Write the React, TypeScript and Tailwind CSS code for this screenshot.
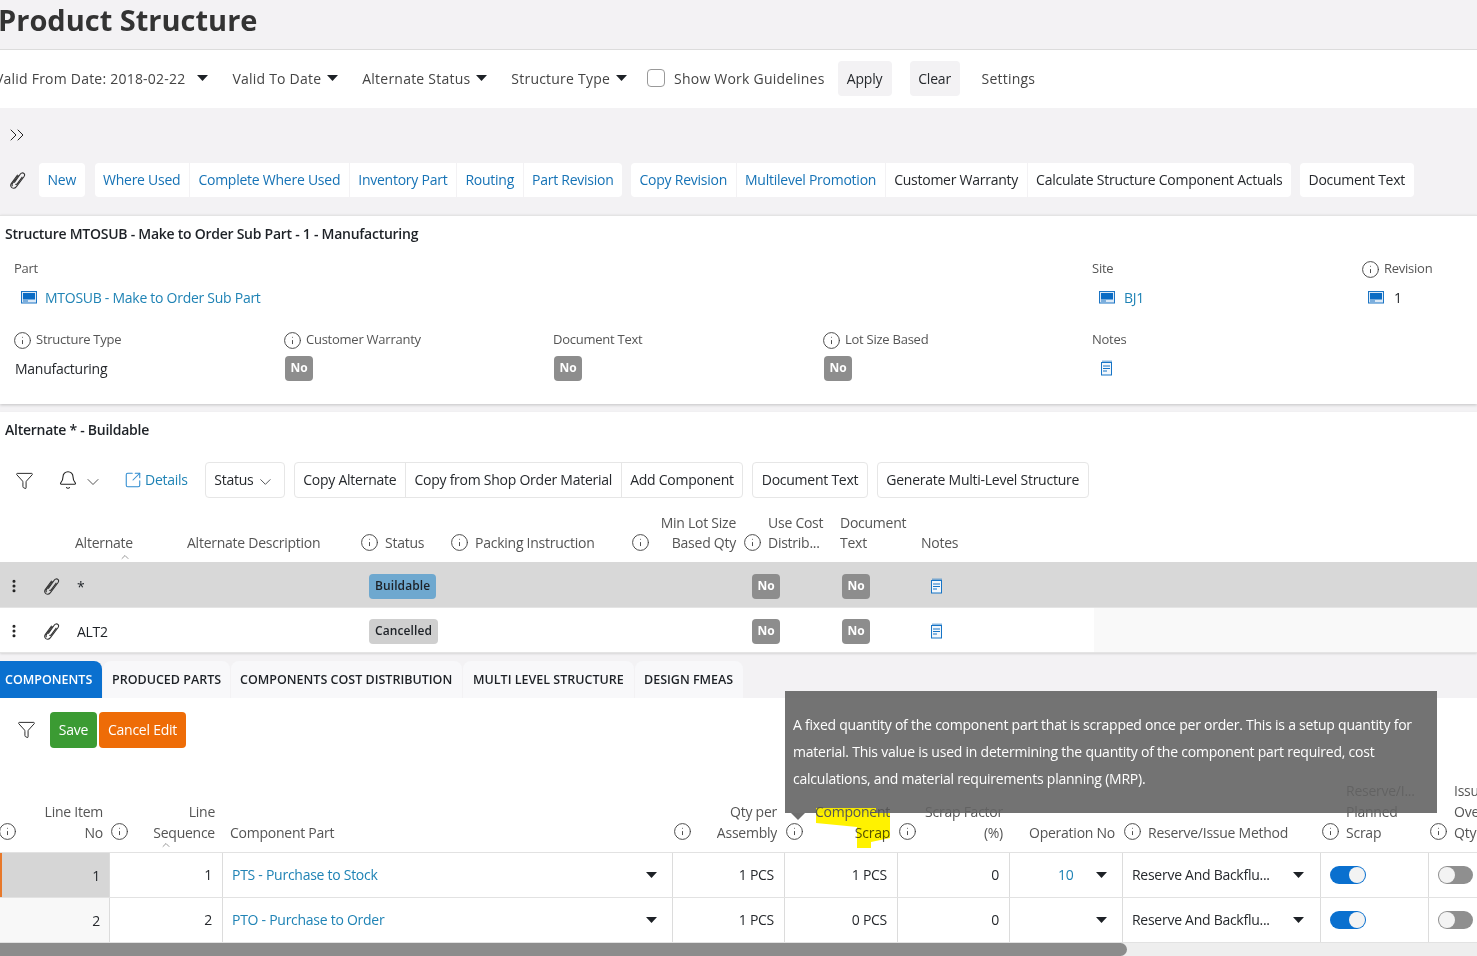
import { Bell, ChevronDown, ChevronUp, ChevronsRight, Filter, Info, MoreVertical, SquareArrowOutUpRight } from "lucide-react";

const FONT = "font-['Open_Sans','Liberation_Sans',sans-serif]";

function Caret({ className = "" }: { className?: string }) {
  return (
    <svg width="11" height="6" viewBox="0 0 11 6" className={`shrink-0 ${className}`} aria-hidden>
      <polygon points="0,0 11,0 5.5,6" fill="#1d2126" />
    </svg>
  );
}

function Clip() {
  return (
    <svg width="18" height="18" viewBox="0 0 18 18" fill="none" stroke="#333" strokeWidth="1.1" aria-hidden>
      <path d="M6.2 11.6 12.2 3.2c1-1.4 2.6-1.6 3.5-.9 1 .7 1.1 2.2.2 3.5L8.4 15.6c-1.3 1.6-3.2 1.9-4.5 1-1.3-1-1.4-2.9-.3-4.4l6.1-8.4" />
      <path d="M4.6 15.2c-.8-.7-.8-1.8-.1-2.8l6-8.2" />
      <path d="M7.4 13.2c.8.5 1.5.1 2-.6l5-6.8" />
    </svg>
  );
}

function Screen() {
  return (
    <svg width="16" height="13" viewBox="0 0 16 13" aria-hidden>
      <rect x="0.5" y="0.5" width="15" height="11.5" fill="#dbe9f7" stroke="#1c75c4" />
      <rect x="2" y="2" width="12" height="6.5" fill="#0b6cc4" />
      <rect x="2" y="9.5" width="5" height="1" fill="#1c75c4" />
    </svg>
  );
}

function NoteIcon() {
  return (
    <svg width="13" height="16" viewBox="0 0 13 16" fill="none" stroke="#1674c6" aria-hidden>
      <rect x="1.5" y="2.5" width="10" height="12.5" fill="#f2f7fc" />
      <path d="M3 0.5V3M5 0.5V3M7 0.5V3M9 0.5V3M11 0.5V3" strokeWidth="1" />
      <path d="M3 6H10M3 8.5H10M3 11H7" />
    </svg>
  );
}

function InfoIcon() {
  return <Info size={19} strokeWidth={1.2} color="#444" className="shrink-0" aria-hidden />;
}

function NoBadge() {
  return (
    <span className="inline-flex h-[25px] w-[28px] items-center justify-center rounded-[4px] bg-[#8d8d8d] text-[12px] font-bold tracking-normal text-white">
      No
    </span>
  );
}

function Toolbtn({ label, link, first, last }: { label: string; link?: boolean; first?: boolean; last?: boolean }) {
  return (
    <button
      className={`h-[34px] whitespace-nowrap bg-white px-[8.5px] pb-[2px] text-[14px] tracking-[-0.25px] ${link ? "text-[#1673b6]" : "text-[#26292d]"} ${first ? "rounded-l-[4px]" : ""} ${last ? "rounded-r-[4px]" : ""}`}
    >
      {label}
    </button>
  );
}

function Group({ items, link }: { items: string[]; link?: boolean }) {
  return (
    <div className="flex gap-px">
      {items.map((t, i) => (
        <Toolbtn key={t} label={t} link={link} first={i === 0} last={i === items.length - 1} />
      ))}
    </div>
  );
}

function OutlineBtn({ children, className = "" }: { children: React.ReactNode; className?: string }) {
  return (
    <div className={`flex h-[36px] items-center whitespace-nowrap border border-[#e6e6e6] px-[8.5px] pb-[2px] text-[14px] tracking-[-0.25px] text-[#26292d] ${className}`}>
      {children}
    </div>
  );
}

function FilterItem({ label, className = "" }: { label: string; className?: string }) {
  return (
    <div className={`flex items-center whitespace-nowrap ${className}`}>
      <span>{label}</span>
      <Caret className="ml-[6px]" />
    </div>
  );
}

function Field({ label, info, children }: { label: string; info?: boolean; children: React.ReactNode }) {
  return (
    <div className="flex flex-col">
      <div className="flex h-[20px] items-center pt-[2px] text-[13px] tracking-[-0.25px] text-[#555]">
        {info && (
          <span className="-ml-[1px] mr-[4px]">
            <InfoIcon />
          </span>
        )}
        <span>{label}</span>
      </div>
      <div className="mt-[4px] flex h-[30px] items-center text-[14px] tracking-[-0.27px] text-[#26292d]">{children}</div>
    </div>
  );
}

const altCols = "grid grid-cols-[75px_112px_174px_90px_181px_112px_96px_81px_1fr]";

function AltRow({ name, status, tone, selected }: { name: string; status: string; tone: string; selected?: boolean }) {
  return (
    <div className={`border-b border-[#e4e4e4] ${selected ? "h-[46px] bg-[#d8d8d8]" : "h-[45px] bg-[#f9f9f9]"}`}>
      <div className={`${altCols} w-[1094px] items-center text-[14px] tracking-[-0.27px] text-[#1d2126] ${selected ? "h-[45px] pt-[3px]" : "h-[44px] bg-white pt-[2px]"}`}>
        <div className="flex items-center pl-[6px]">
          <MoreVertical size={16} color="#222" strokeWidth={2.6} aria-hidden />
          <span className="ml-[20px]">
            <Clip />
          </span>
        </div>
        <div className="pl-[2px]">{name}</div>
        <div />
        <div className="pl-[8px]">
          <span className={`inline-flex h-[25px] items-center rounded-[4px] px-[6px] text-[12px] font-semibold tracking-[0.1px] text-[#1d2126] ${tone}`}>
            {status}
          </span>
        </div>
        <div />
        <div />
        <div className="pl-[8px]">
          <NoBadge />
        </div>
        <div className="pl-[2px]">
          <NoBadge />
        </div>
        <div className="flex items-center pl-[9px]">
          <NoteIcon />
        </div>
      </div>
    </div>
  );
}

const compCols = "grid grid-cols-[110px_113px_450px_112px_113px_112px_113px_198px_108px_1fr]";

function HeadCell({ children, info, right, pl = "", pr = "pr-[8px]" }: { children: React.ReactNode; info?: boolean; right?: boolean; pl?: string; pr?: string }) {
  return (
    <div className={`flex h-full items-end ${right ? "justify-between" : "gap-[6px]"} ${pl} ${pr}`}>
      {info ? <span className="mb-[2px]"><InfoIcon /></span> : <span />}
      <div className={`overflow-hidden whitespace-nowrap leading-[21px] ${right ? "text-right" : "text-left"}`}>{children}</div>
    </div>
  );
}

function Toggle({ on }: { on?: boolean }) {
  return on ? (
    <span className="flex h-[18px] w-[36px] items-center justify-end rounded-full bg-[#0a70cf] pr-[1px]">
      <span className="h-[16px] w-[16px] rounded-full bg-[#f3f3f3]" />
    </span>
  ) : (
    <span className="flex h-[18px] w-[35px] items-center rounded-full bg-[#8f8f8f] pl-[1px]">
      <span className="h-[16px] w-[16px] rounded-full bg-[#f3f3f3]" />
    </span>
  );
}

function CompRow({ no, seq, part, qty, scrap, op, selected }: { no: number; seq: number; part: string; qty: string; scrap: string; op?: string; selected?: boolean }) {
  const cell = "flex items-center border-r border-[#dcdcdc]";
  const num = `${cell} justify-end pb-[2px] pr-[10px]`;
  return (
    <div className={`${compCols} h-[45px] border-b border-[#e2e2e2] text-[14px] tracking-[-0.27px] text-[#26292d]`}>
      <div className={`${cell} justify-end pr-[9px] ${selected ? "border-l-2 border-l-[#e8792b] bg-[#d6d6d6]" : "bg-[#f8f8f8]"}`}>{no}</div>
      <div className={num}>{seq}</div>
      <div className={`${cell} justify-between pl-[9px] pr-[15px] text-[#1f83b5]`}>
        <span className="-mt-[2px]">{part}</span>
        <Caret />
      </div>
      <div className={num}>{qty}</div>
      <div className={num}>{scrap}</div>
      <div className={num}>0</div>
      <div className={`${cell} justify-between pl-[48px] pr-[15px] text-[#1f83b5]`}>
        <span className="-mt-[2px]">{op}</span>
        <Caret />
      </div>
      <div className={`${cell} justify-between pl-[9px] pr-[16px]`}>
        <span className="-mt-[2px]">Reserve And Backflu...</span>
        <Caret />
      </div>
      <div className={`${cell} pl-[9px]`}>
        <Toggle on />
      </div>
      <div className="flex items-center pl-[9px]">
        <Toggle />
      </div>
    </div>
  );
}

export default function App() {
  return (
    <div className={`relative flex h-[956px] w-[1477px] flex-col overflow-hidden bg-[#f3f2f4] ${FONT}`}>
      <div className="flex h-[50px] items-center border-b border-[#dcdcdc] pb-[10px]">
        <h1 className="-ml-[2px] text-[29px] font-bold leading-none text-[#333]">Product Structure</h1>
      </div>

      <div className="flex h-[58px] items-center whitespace-nowrap bg-white pb-[2px] text-[14px] tracking-[0.22px] text-[#444]">
        <div className="-ml-[5px] flex items-center whitespace-nowrap">
          <span>Valid From Date: 2018-02-22</span>
          <Caret className="ml-[12px]" />
        </div>
        <FilterItem label="Valid To Date" className="ml-[24px]" />
        <FilterItem label="Alternate Status" className="ml-[24px]" />
        <FilterItem label="Structure Type" className="ml-[24px]" />
        <span className="ml-[20px] h-[18px] w-[18px] rounded-[4px] border border-[#999]" />
        <span className="ml-[9px]">Show Work Guidelines</span>
        <span className="ml-[13px] flex h-[35px] w-[54px] items-center justify-center rounded-[4px] bg-[#f3f2f4] tracking-[-0.2px] text-[#26292d]">Apply</span>
        <span className="ml-[18px] flex h-[35px] w-[50px] items-center justify-center rounded-[4px] bg-[#f3f2f4] tracking-[-0.2px] text-[#26292d]">Clear</span>
        <span className="ml-[22px]">Settings</span>
      </div>

      <div className="h-[107px] shrink-0">
        <div className="flex h-[55px] items-center pb-[2px] pl-[5px]">
          <ChevronsRight size={24} strokeWidth={1} color="#222" aria-hidden />
        </div>
        <div className="flex items-center">
          <span className="ml-[8px] mr-[13px]">
            <Clip />
          </span>
          <div className="flex gap-[10px]">
            <Group items={["New"]} link />
            <div className="flex gap-[9px]">
              <Group items={["Where Used", "Complete Where Used", "Inventory Part", "Routing", "Part Revision"]} link />
              <div className="flex gap-px">
                <Toolbtn label="Copy Revision" link first />
                <Toolbtn label="Multilevel Promotion" link />
                <Toolbtn label="Customer Warranty" />
                <Toolbtn label="Calculate Structure Component Actuals" last />
              </div>
              <Group items={["Document Text"]} />
            </div>
          </div>
        </div>
      </div>

      <section className="h-[189px] shrink-0 border-t border-[#e4e4e4] bg-white shadow-[0_1px_3px_rgba(0,0,0,0.2)]">
        <h2 className="flex h-[34px] items-center pl-[5px] text-[14px] font-semibold tracking-[-0.26px] text-[#1d2126]">
          Structure MTOSUB - Make to Order Sub Part - 1 - Manufacturing
        </h2>
        <div className="mt-[8px] grid grid-cols-[270px_269px_270px_269px_270px_1fr] gap-y-[17px] pl-[14px]">
          <div className="col-span-4">
            <Field label="Part">
              <span className="ml-[7px] mr-[8px]">
                <Screen />
              </span>
              <span className="text-[#1f83b5]">MTOSUB - Make to Order Sub Part</span>
            </Field>
          </div>
          <Field label="Site">
            <span className="ml-[7px] mr-[9px]">
              <Screen />
            </span>
            <span className="text-[#1f83b5]">BJ1</span>
          </Field>
          <Field label="Revision" info>
            <span className="ml-[6px] mr-[10px]">
              <Screen />
            </span>
            <span>1</span>
          </Field>
          <Field label="Structure Type" info>
            <span className="pl-[1px]">Manufacturing</span>
          </Field>
          <Field label="Customer Warranty" info>
            <span className="pl-[1px]">
              <NoBadge />
            </span>
          </Field>
          <Field label="Document Text">
            <span className="pl-[1px]">
              <NoBadge />
            </span>
          </Field>
          <Field label="Lot Size Based" info>
            <span className="pl-[1px]">
              <NoBadge />
            </span>
          </Field>
          <Field label="Notes">
            <span className="pl-[8px]">
              <NoteIcon />
            </span>
          </Field>
        </div>
      </section>

      <section className="mt-[8px] h-[241px] shrink-0 bg-white shadow-[0_1px_2px_rgba(0,0,0,0.12)]">
        <h2 className="flex h-[35px] items-center pl-[5px] text-[14px] font-semibold tracking-[-0.26px] text-[#1d2126]">Alternate * - Buildable</h2>
        <div className="mt-[15px] flex h-[36px] items-center">
          <span className="ml-[15px]">
            <Filter size={19} strokeWidth={1.2} color="#222" aria-hidden />
          </span>
          <span className="ml-[24px]">
            <Bell size={20} strokeWidth={1.3} color="#222" aria-hidden />
          </span>
          <ChevronDown size={20} strokeWidth={1} color="#333" className="ml-[5px] mt-[3px]" aria-hidden />
          <SquareArrowOutUpRight size={18} strokeWidth={1.4} color="#2e8bd0" className="ml-[21px]" aria-hidden />
          <span className="ml-[3px] pb-[2px] text-[14px] tracking-[-0.25px] text-[#1f83b5]">Details</span>
          <OutlineBtn className="ml-[17px] w-[80px] gap-[3px] rounded-[4px]">
            <span>Status</span>
            <ChevronDown size={20} strokeWidth={1} className="mt-[5px]" aria-hidden />
          </OutlineBtn>
          <OutlineBtn className="ml-[9px] rounded-l-[4px]">Copy Alternate</OutlineBtn>
          <OutlineBtn className="-ml-px">Copy from Shop Order Material</OutlineBtn>
          <OutlineBtn className="-ml-px rounded-r-[4px]">Add Component</OutlineBtn>
          <OutlineBtn className="ml-[9px] rounded-[4px]">Document Text</OutlineBtn>
          <OutlineBtn className="ml-[9px] rounded-[4px]">Generate Multi-Level Structure</OutlineBtn>
        </div>
        <div className={`${altCols} h-[64px] text-[14px] leading-[20px] tracking-[-0.25px] text-[#555]`}>
          <div />
          <div className="relative flex items-end pb-[9px]">
            Alternate
            <ChevronUp size={12} strokeWidth={1.2} color="#555" className="absolute -bottom-[1px] left-[44px]" aria-hidden />
          </div>
          <div className="flex items-end pb-[9px]">Alternate Description</div>
          <div className="-ml-[1px] flex items-end gap-[6px] pb-[9px]">
            <span className="mb-[1px]"><InfoIcon /></span>Status
          </div>
          <div className="-ml-[1px] flex items-end gap-[6px] pb-[9px]">
            <span className="mb-[1px]"><InfoIcon /></span>Packing Instruction
          </div>
          <div className="-ml-[1px] flex items-end justify-between pb-[9px] pr-[8px]">
            <span className="mb-[1px]"><InfoIcon /></span>
            <span className="text-right">Min Lot Size<br />Based Qty</span>
          </div>
          <div className="-ml-[1px] flex items-end gap-[6px] pb-[9px]">
            <span className="mb-[1px]"><InfoIcon /></span>
            <span>Use Cost<br />Distrib...</span>
          </div>
          <div className="flex items-end pb-[9px]"><span>Document<br />Text</span></div>
          <div className="flex items-end pb-[9px]">Notes</div>
        </div>
        <AltRow name="*" status="Buildable" tone="bg-[#6ea8cf]" selected />
        <AltRow name="ALT2" status="Cancelled" tone="bg-[#cfcfcf]" />
      </section>

      <div className="mt-[8px] flex h-[37px] shrink-0 text-[12.5px] font-semibold text-[#1d2126]">
        <div className="flex w-[102px] items-center rounded-tr-[8px] bg-[#0a70cf] pl-[5px] pt-[2px] text-white">COMPONENTS</div>
        <div className="ml-px flex w-[127px] items-center rounded-t-[8px] bg-[#f8f8fa] pl-[9px] pt-[2px]">PRODUCED PARTS</div>
        <div className="ml-px flex w-[231px] items-center rounded-t-[8px] bg-[#f8f8fa] pl-[9px] pt-[2px]">COMPONENTS COST DISTRIBUTION</div>
        <div className="ml-px flex w-[171px] items-center rounded-t-[8px] bg-[#f8f8fa] pl-[10px] pt-[2px]">MULTI LEVEL STRUCTURE</div>
        <div className="ml-px flex w-[108px] items-center rounded-t-[8px] bg-[#f8f8fa] pl-[9px] pt-[2px]">DESIGN FMEAS</div>
      </div>

      <section className="flex-1 bg-white">
        <div className="flex h-[50px] items-end">
          <span className="mb-[9px] ml-[17px]">
            <Filter size={19} strokeWidth={1.2} color="#222" aria-hidden />
          </span>
          <span className="ml-[14px] flex h-[36px] w-[47px] items-center justify-center rounded-[4px] bg-[#3b9b33] pb-[2px] text-[14px] tracking-[-0.25px] text-white">Save</span>
          <span className="ml-[2px] flex h-[36px] w-[87px] items-center justify-center rounded-[4px] bg-[#ee6c07] pb-[2px] text-[14px] tracking-[-0.25px] text-white">Cancel Edit</span>
        </div>
        <div className={`${compCols} h-[105px] border-b border-[#e2e2e2] pb-[9px] text-[14px] tracking-[-0.25px] text-[#555]`}>
          <HeadCell info right pr="pr-[7px]" pl="-ml-[2px]">Line Item<br />No</HeadCell>
          <div className="relative">
            <HeadCell info right>Line<br />Sequence</HeadCell>
            <ChevronUp size={12} strokeWidth={1.2} color="#555" className="absolute -bottom-[8px] right-[51px]" aria-hidden />
          </div>
          <div className="flex items-end pl-[7px] leading-[21px]">Component Part</div>
          <HeadCell info right>Qty per<br />Assembly</HeadCell>
          <HeadCell info right><span className="relative z-10">Component</span><br />Scrap</HeadCell>
          <HeadCell info right pr="pr-[7px]">Scrap Factor<br />(%)</HeadCell>
          <HeadCell right>Operation No</HeadCell>
          <HeadCell info>Reserve/Issue Method</HeadCell>
          <HeadCell info>Reserve/I...<br />Planned<br />Scrap</HeadCell>
          <HeadCell info pr="pr-0">Issue<br />Over<br />Qty</HeadCell>
        </div>
        <CompRow no={1} seq={1} part="PTS - Purchase to Stock" qty="1 PCS" scrap="1 PCS" op="10" selected />
        <CompRow no={2} seq={2} part="PTO - Purchase to Order" qty="1 PCS" scrap="0 PCS" />
        <div className="h-[13px] bg-[#eeeeee]">
          <div className="h-full w-[1127px] rounded-r-[7px] bg-[#8c8c8c]" />
        </div>
      </section>

      {/* tooltip over the grid header, then the hand-drawn marker on top of it */}
      <div className="absolute left-[785px] top-[691px] h-[122px] w-[652px] bg-[rgba(100,100,100,0.9)] px-[8px] pt-[20px] text-[14px] leading-[27px] tracking-[-0.23px] text-white">
        A fixed quantity of the component part that is scrapped once per order. This is a setup quantity for
        <br />
        material. This value is used in determining the quantity of the component part required, cost
        <br />
        calculations, and material requirements planning (MRP).
      </div>
      <div className="absolute left-[791px] top-[813px] h-0 w-0 border-x-[7px] border-t-[7px] border-x-transparent border-t-[#6e6e6e]" />
      <svg width="80" height="44" viewBox="0 0 80 44" className="absolute left-[813px] top-[806px]" aria-hidden>
        <rect x="3" y="2" width="60" height="5" fill="#f4e800" />
      </svg>
      <svg width="80" height="44" viewBox="0 0 80 44" className="absolute left-[813px] top-[806px] mix-blend-multiply" aria-hidden>
        <path d="M3 7 L77 7 L77 32 L58 36 L58 42 L44 42 L44 21 L3 17 Z" fill="#fff200" />
      </svg>
    </div>
  );
}
